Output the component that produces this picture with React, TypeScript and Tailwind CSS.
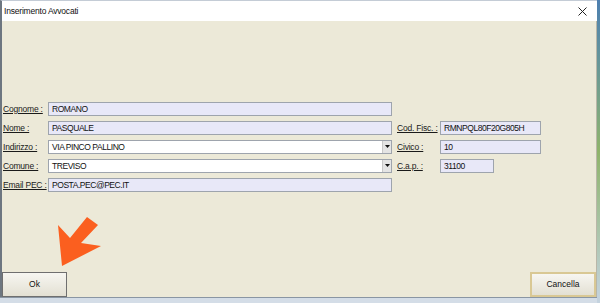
import React from "react";

const font = { fontFamily: '"Liberation Sans", Arial, sans-serif' };

function Label({ text, w }: { text: string; w: string }) {
  return (
    <div
      className={`${w} shrink-0 whitespace-nowrap text-[8.5px] tracking-[-0.2px] leading-[14px] text-[#1a1a1a] underline underline-offset-[1px]`}
    >
      {text}
    </div>
  );
}

function Field({ value, w, white, combo }: { value: string; w: string; white?: boolean; combo?: boolean }) {
  return (
    <div
      className={`${w} h-[14px] shrink-0 flex items-center border border-[#9ea4ad] ${
        white ? "bg-white" : "bg-[#e8e8f8]"
      }`}
    >
      <span className="flex-1 pl-[3px] whitespace-nowrap text-[8.5px] tracking-[-0.45px] leading-[12px] text-[#111]">
        {value}
      </span>
      {combo && (
        <div className="w-[9px] h-[12px] bg-[#e4e4e4] border-l border-[#c8c8c8] flex items-center justify-center">
          <svg width="5" height="3" viewBox="0 0 5 3">
            <polygon points="0,0 5,0 2.5,3" fill="#111" />
          </svg>
        </div>
      )}
    </div>
  );
}

export default function App() {
  return (
    <div className="w-[600px] h-[303px] flex bg-[#c9d6e2] overflow-hidden relative" style={font}>
      <div className="w-[597px] h-[303px] flex flex-col">
        <div className="h-[297px] flex flex-col border-l-2 border-[#6d7680] border-t border-t-[#c4ccd6]">
          {/* title bar */}
          <div className="h-[20px] bg-white flex items-center justify-between pl-[2px] pr-[10px]">
            <span className="text-[8.5px] tracking-[-0.2px] text-[#111]">Inserimento Avvocati</span>
            <svg width="9" height="9" viewBox="0 0 9 9">
              <path d="M0.5 0.5 L8.5 8.5 M8.5 0.5 L0.5 8.5" stroke="#222" strokeWidth="1" />
            </svg>
          </div>
          {/* body */}
          <div className="flex-1 bg-[#ece9d8] flex flex-col border-r border-[#b9b6a8]">
            <div className="pt-[80px] pl-[1px] flex flex-col gap-[4px]">
              <div className="flex items-center h-[15px]">
                <Label text="Cognome :" w="w-[45px]" />
                <Field value="ROMANO" w="w-[344px]" />
              </div>
              <div className="flex items-center h-[15px]">
                <Label text="Nome :" w="w-[45px]" />
                <Field value="PASQUALE" w="w-[344px]" />
                <div className="w-[5px]" />
                <Label text="Cod. Fisc. :" w="w-[43px]" />
                <Field value="RMNPQL80F20G805H" w="w-[101px]" />
              </div>
              <div className="flex items-center h-[15px]">
                <Label text="Indirizzo :" w="w-[45px]" />
                <Field value="VIA PINCO PALLINO" w="w-[344px]" white combo />
                <div className="w-[5px]" />
                <Label text="Civico :" w="w-[43px]" />
                <Field value="10" w="w-[101px]" />
              </div>
              <div className="flex items-center h-[15px]">
                <Label text="Comune :" w="w-[45px]" />
                <Field value="TREVISO" w="w-[344px]" white combo />
                <div className="w-[5px]" />
                <Label text="C.a.p. :" w="w-[43px]" />
                <Field value="31100" w="w-[54px]" />
              </div>
              <div className="flex items-center h-[15px]">
                <Label text="Email PEC :" w="w-[45px]" />
                <Field value="POSTA.PEC@PEC.IT" w="w-[344px]" />
              </div>
            </div>
            <div className="mt-auto flex justify-between items-end">
              <button className="w-[65px] h-[25px] border border-[#6f6f6f] bg-gradient-to-b from-[#f7f6f1] to-[#e3e0d3] text-[8.5px] text-[#111]">
                Ok
              </button>
              <button className="w-[66px] h-[25px] border-2 border-[#d9c894] bg-gradient-to-b from-[#f7f6f1] to-[#e3e0d3] text-[8.5px] text-[#111]">
                Cancella
              </button>
            </div>
          </div>
        </div>
        <div className="flex-1 bg-[#d4dde7] border-t border-[#8a96a3]" />
      </div>
      <div className="flex-1 bg-gradient-to-b from-[#4d7fb0] via-[#8fb36a] to-[#c5d3e0]" />
      {/* orange arrow */}
      <svg className="absolute left-0 top-0 pointer-events-none" width="600" height="303">
        <polygon points="62,266 58,225 70,238 87,217 98,225 81,243 101,246" fill="#fb5f1f" />
      </svg>
    </div>
  );
}
